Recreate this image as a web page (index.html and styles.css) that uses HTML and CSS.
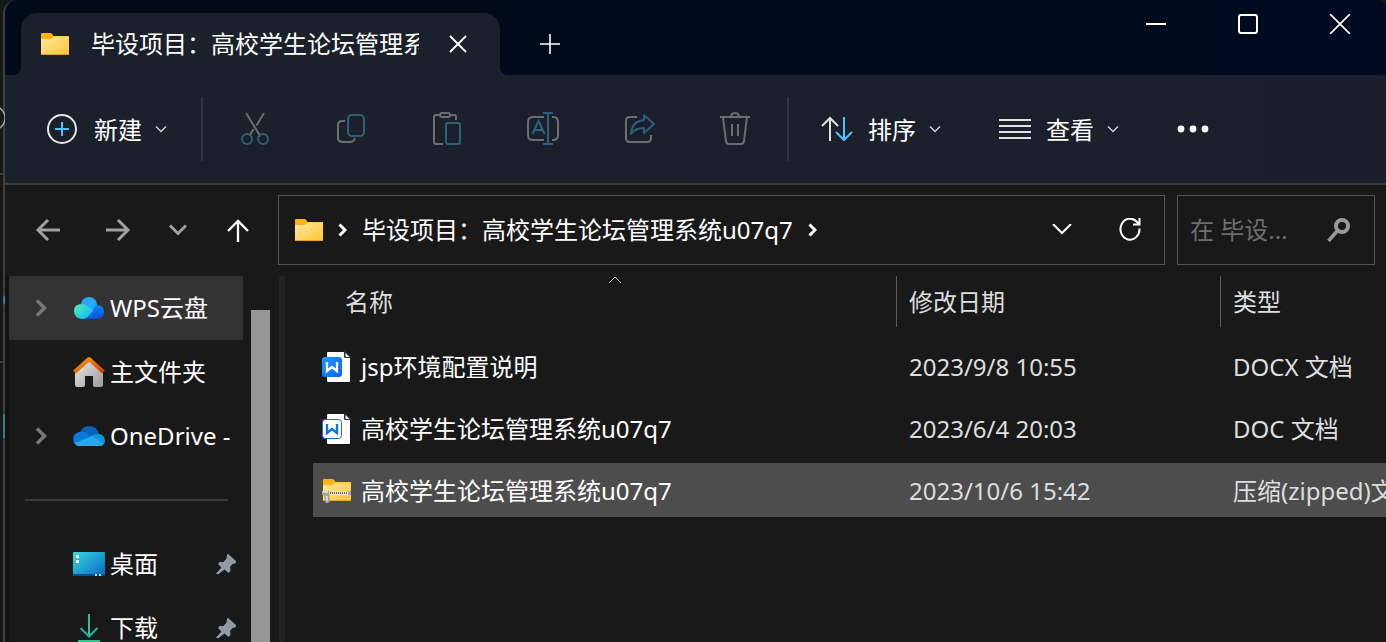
FILE: index.html
```html
<!DOCTYPE html>
<html lang="zh-CN">
<head>
  <meta charset="UTF-8">
  <meta name="viewport" content="width=device-width, initial-scale=1.0">
  <title>毕设项目：高校学生论坛管理系统u07q7</title>
  <link rel="stylesheet" href="styles.css">
</head>
<body>
  <!-- shared shapes -->
  <svg class="defs" width="0" height="0" aria-hidden="true">
    <defs>
      <linearGradient id="folderFront" x1="0" y1="0" x2="1" y2="1">
        <stop offset="0" stop-color="#ffe9a6"/><stop offset="1" stop-color="#ffc52e"/>
      </linearGradient>
      <linearGradient id="wpsBlue" x1="0" y1="0" x2="1" y2="1">
        <stop offset="0" stop-color="#229bff"/><stop offset="1" stop-color="#0a62f5"/>
      </linearGradient>
      <symbol id="folder" viewBox="0 0 28 22">
        <path d="M0 1q0-1 1-1h8.500q1 0 1.700 1l1.300 2H28v6H0z" fill="#fdb40f"/>
        <path d="M0 6h10l2.500-2.500H27q1 0 1 1V21q0 1-1 1H1q-1 0-1-1z" fill="url(#folderFront)"/>
        <path d="M0 21.500h28" stroke="#e9a21b"/>
      </symbol>
      <symbol id="down" viewBox="0 0 12 8">
        <path d="M1 1.500l5 5 5-5" fill="none" stroke="#d0d0d0" stroke-width="1.500"/>
      </symbol>
      <symbol id="expand" viewBox="0 0 12 18">
        <path d="M2 1.500l7.500 7.500L2 16.500" fill="none" stroke="#777" stroke-width="3.500"/>
      </symbol>
      <symbol id="crumb" viewBox="0 0 9 14">
        <path d="M1.500 1.500L7 7l-5.500 5.500" fill="none" stroke="#fff" stroke-width="3"/>
      </symbol>
      <symbol id="pin" viewBox="0 0 22 22">
        <path d="M13 1l8 7-.5 2.500-3 .5-2.500 3 .5 4-2 2-4-3.500-6.500 5-2-1 5.500-6L3 11l1.500-2h4l3-3.500.5-4z" fill="#919ba3"/>
      </symbol>
    </defs>
  </svg>

  <svg class="behind" viewBox="0 0 5 642" width="5" height="642" aria-hidden="true">
    <circle cx="-7" cy="118" r="12" fill="#1a1a1a" stroke="#a5a5a5" stroke-width="1.500"/>
    <path d="M0 174h4M0 362h4" stroke="#3a3a3a" stroke-width="2"/>
    <path d="M5 295q-2 1-2 5t2 5z" fill="#2f7fc4"/>
    <path d="M3 414h2v24H3z" fill="#347d83"/>
  </svg>

  <div class="window">
    <header class="titlebar">
      <div class="tab">
        <svg class="tab-icon" width="28" height="22"><use href="#folder"/></svg>
        <span class="tab-title">毕设项目：高校学生论坛管理系统u07q7</span>
        <button class="tab-close" aria-label="关闭标签页">
          <svg width="18" height="18" viewBox="0 0 18 18"><path d="M1 1l16 16M17 1L1 17" stroke="#fff" stroke-width="1.800"/></svg>
        </button>
      </div>
      <button class="tab-add" aria-label="新建标签页">
        <svg width="20" height="20" viewBox="0 0 20 20"><path d="M10 0v20M0 10h20" stroke="#fff" stroke-width="1.600"/></svg>
      </button>
      <div class="window-controls">
        <button aria-label="最小化"><svg width="20" height="20" viewBox="0 0 20 20"><path d="M0 10h20" stroke="#fff" stroke-width="2"/></svg></button>
        <button aria-label="最大化"><svg width="20" height="20" viewBox="0 0 20 20"><rect x="1" y="1" width="18" height="18" rx="2" fill="none" stroke="#fff" stroke-width="2"/></svg></button>
        <button aria-label="关闭"><svg width="20" height="20" viewBox="0 0 20 20"><path d="M0 0l20 20M20 0L0 20" stroke="#fff" stroke-width="1.700"/></svg></button>
      </div>
    </header>

    <div class="toolbar">
      <button class="menu-button new-button">
        <svg width="30" height="30" viewBox="0 0 30 30"><circle cx="15" cy="15" r="14" fill="none" stroke="#e6e6e6" stroke-width="2"/><path d="M15 8v14M8 15h14" stroke="#4cc2ff" stroke-width="2"/></svg>
        <span>新建</span>
        <svg class="caret" width="12" height="8"><use href="#down"/></svg>
      </button>
      <div class="divider"></div>
      <div class="tools">
        <button aria-label="剪切" disabled>
          <svg width="32" height="34" viewBox="0 0 32 34" fill="none" stroke-width="2"><path d="M7 1l14.500 23.500M25 1l-7.500 12.500M14.500 17L10.500 24" stroke="#6b6d72"/><g stroke="#2c607f"><circle cx="8" cy="27" r="5"/><circle cx="24" cy="27" r="5"/></g></svg>
        </button>
        <button aria-label="复制" disabled>
          <svg width="32" height="32" viewBox="0 0 32 32" fill="none" stroke-width="2"><path d="M10 8H7q-4 0-4 4v13q0 4 5 4h7q4 0 5-4" stroke="#6b6d72"/><rect x="13" y="2" width="16" height="21" rx="4" stroke="#2c607f"/></svg>
        </button>
        <button aria-label="粘贴" disabled>
          <svg width="32" height="34" viewBox="0 0 32 34" fill="none" stroke-width="2"><path d="M12 32H5q-2 0-2-2V5q0-2 2-2h4M19 3h4q2 0 2 2v3" stroke="#6b6d72"/><rect x="9" y="1" width="10" height="4" rx="2" stroke="#6b6d72"/><rect x="15" y="11" width="14" height="21" rx="2" stroke="#2c607f"/></svg>
        </button>
        <button aria-label="重命名" disabled>
          <svg width="34" height="34" viewBox="0 0 34 34" fill="none" stroke-width="2"><path d="M18 5H7q-5 0-5 5v13q0 5 5 5h11M26 5h1q5 0 5 5v13q0 5-5 5h-1" stroke="#6b6d72"/><path d="M6.500 22L12.500 9l6 13M8.500 18h8M22 1v31M17 1h10M17 32h10" stroke="#2c607f"/></svg>
        </button>
        <button aria-label="共享" disabled>
          <svg width="32" height="32" viewBox="0 0 32 32" fill="none" stroke-width="2" stroke-linejoin="round"><path d="M14 4H7q-4 0-4 4v17q0 4 4 4h17q4 0 4-4v-3" stroke="#6b6d72"/><path d="M21 2l10 9-10 9v-5q-9 0-13 6 1-13 13-14z" stroke="#2c607f"/></svg>
        </button>
        <button aria-label="删除" disabled>
          <svg width="32" height="34" viewBox="0 0 32 34" fill="none" stroke="#6b6d72" stroke-width="2"><path d="M1 5h30M4 5l3 24q.500 3 3 3h12q2.500 0 3-3l3-24M12 5q0-4 4-4t4 4M13 12v12M19 12v12"/></svg>
        </button>
      </div>
      <div class="divider"></div>
      <button class="menu-button">
        <svg width="32" height="26" viewBox="0 0 32 26" fill="none" stroke-width="2"><path d="M9 25V2M1 10l8-8 8 8" stroke="#e0e0e0"/><path d="M23 1v23M15 16l8 8 8-8" stroke="#4cc2ff"/></svg>
        <span>排序</span>
        <svg class="caret" width="12" height="8"><use href="#down"/></svg>
      </button>
      <button class="menu-button">
        <svg width="32" height="20" viewBox="0 0 32 20"><path d="M0 1h32M0 7h32M0 13h32M0 19h32" stroke="#e0e0e0" stroke-width="2"/></svg>
        <span>查看</span>
        <svg class="caret" width="12" height="8"><use href="#down"/></svg>
      </button>
      <button class="menu-button" aria-label="查看更多">
        <svg width="32" height="8" viewBox="0 0 32 8" fill="#fff"><circle cx="4" cy="4" r="3.400"/><circle cx="16" cy="4" r="3.400"/><circle cx="28" cy="4" r="3.400"/></svg>
      </button>
    </div>

    <div class="location">
      <div class="history">
        <button aria-label="后退"><svg width="26" height="24" viewBox="0 0 26 24" fill="none" stroke="#a0a0a0" stroke-width="3"><path d="M25 12H3M13 2L3 12l10 10"/></svg></button>
        <button aria-label="前进"><svg width="26" height="24" viewBox="0 0 26 24" fill="none" stroke="#a0a0a0" stroke-width="3"><path d="M1 12h22M13 2l10 10-10 10"/></svg></button>
        <button class="recent" aria-label="最近浏览的位置"><svg width="18" height="12" viewBox="0 0 18 12" fill="none" stroke="#a0a0a0" stroke-width="3"><path d="M1 1.500l8 8 8-8"/></svg></button>
        <button aria-label="向上"><svg width="24" height="24" viewBox="0 0 24 24" fill="none" stroke="#fff" stroke-width="2.300"><path d="M12 24V3M2 13L12 3l10 10"/></svg></button>
      </div>
      <div class="address">
        <svg class="address-icon" width="28" height="22"><use href="#folder"/></svg>
        <svg width="9" height="14"><use href="#crumb"/></svg>
        <a href="#folder-root">毕设项目：高校学生论坛管理系统u07q7</a>
        <svg width="9" height="14"><use href="#crumb"/></svg>
        <button class="address-drop" aria-label="上一个位置"><svg width="20" height="12" viewBox="0 0 20 12" fill="none" stroke="#fff" stroke-width="2"><path d="M1 0l9 9 9-9"/></svg></button>
        <button class="address-refresh" aria-label="刷新"><svg width="24" height="24" viewBox="0 0 24 24" fill="none" stroke="#fff" stroke-width="2"><path d="M21.500 10.500a9.500 10.500 0 1 1-3-7l3 2.500M21.500 0v6.500H15"/></svg></button>
      </div>
      <form class="search">
        <input type="text" aria-label="搜索" placeholder="在 毕设...">
        <button aria-label="搜索"><svg width="24" height="24" viewBox="0 0 24 24" fill="none" stroke="#999"><circle cx="15" cy="8" r="6" stroke-width="4"/><path d="M11 12L1.500 23" stroke-width="3.500"/></svg></button>
      </form>
    </div>

    <div class="content">
      <aside class="sidebar">
        <nav>
          <a class="place active" href="#wps">
            <svg class="arrow" width="12" height="18"><use href="#expand"/></svg>
            <svg width="32" height="24" viewBox="0 0 32 24">
              <defs>
                <linearGradient id="cloudGreen" x1="0" y1="0" x2="1" y2="1"><stop offset="0" stop-color="#52eeb0"/><stop offset="1" stop-color="#08b7ff"/></linearGradient>
                <linearGradient id="cloudBlue" x1="0" y1="0" x2="0" y2="1"><stop offset="0" stop-color="#0a86f8"/><stop offset="1" stop-color="#0450d8"/></linearGradient>
              </defs>
              <circle cx="16" cy="9" r="8" fill="#28a8ff"/>
              <path d="M14 23l9-14q8 0 8 7 0 7-8 7z" fill="url(#cloudBlue)"/>
              <path d="M9 23q-8-1-8-8t8-7q4 0 11 7l-6 7q-2 1-5 1z" fill="url(#cloudGreen)"/>
            </svg>
            <span>WPS云盘</span>
          </a>
          <a class="place" href="#home">
            <i class="arrow"></i>
            <svg width="32" height="32" viewBox="0 0 32 32">
              <defs>
                <linearGradient id="wall" x1="0" y1="0" x2="1" y2="1"><stop offset="0" stop-color="#eee"/><stop offset="1" stop-color="#999"/></linearGradient>
                <linearGradient id="roof" x1="0" y1="0" x2="1" y2="1"><stop offset="0" stop-color="#ff9d0a"/><stop offset="1" stop-color="#cf3c03"/></linearGradient>
              </defs>
              <path d="M2 14L16 2l14 12v15q0 2-2 2h-6q-2 0-2-2v-9h-8v9q0 2-2 2H4q-2 0-2-2z" fill="url(#wall)"/>
              <path d="M1.500 16L16 3l14.500 13" fill="none" stroke="url(#roof)" stroke-width="4" stroke-linejoin="round"/>
            </svg>
            <span>主文件夹</span>
          </a>
          <a class="place" href="#onedrive">
            <svg class="arrow" width="12" height="18"><use href="#expand"/></svg>
            <svg width="32" height="22" viewBox="0 0 32 22">
              <path d="M7 7q3-6 9-6 8 0 10 8l-9 4z" fill="#0763b8"/>
              <path d="M1 18q-3-9 5-11 5-1 8 2l7 4L5 21q-3-1-4-3z" fill="#0b7ad8"/>
              <path d="M18 11q4-3 8-2 6 1 6 7-1 5-6 5z" fill="#1490df"/>
              <path d="M2 18l17-7 12 8q-2 2-4 2H6q-3 0-4-3z" fill="#28a8ea"/>
            </svg>
            <span>OneDrive -</span>
          </a>
          <hr>
          <a class="place" href="#desktop">
            <i class="arrow"></i>
            <svg width="32" height="24" viewBox="0 0 32 24">
              <defs><linearGradient id="desk" x1="0" y1="0" x2="1" y2="1"><stop offset="0" stop-color="#35d9e3"/><stop offset="1" stop-color="#0a68c4"/></linearGradient></defs>
              <rect width="32" height="24" rx="1" fill="url(#desk)"/>
              <path d="M0 22h32v1q0 1-1 1H1q-1 0-1-1z" fill="#0b4f86"/>
              <path d="M3 3h3v3H3zM3 8h3v3H3z" fill="#fff"/><path d="M22 22h2v2h-2zM26 22h2v2h-2z" fill="#b9dcf0"/>
            </svg>
            <span>桌面</span>
            <svg width="22" height="22"><use href="#pin"/></svg>
          </a>
          <a class="place" href="#downloads">
            <i class="arrow"></i>
            <svg width="32" height="30" viewBox="0 0 32 30" fill="none" stroke-width="2">
              <path d="M16 1v22" stroke="#2fc48d"/><path d="M7.500 15l8.500 8.500 8.500-8.500" stroke="#1fb39a"/><path d="M5 28h22" stroke="#2fc48d"/>
            </svg>
            <span>下载</span>
            <svg width="22" height="22"><use href="#pin"/></svg>
          </a>
        </nav>
        <div class="scrollbar"></div>
      </aside>

      <main class="files">
        <table>
          <thead>
            <tr>
              <th class="col-name"><div>名称<svg class="sort-mark" width="14" height="8" viewBox="0 0 14 8"><path d="M1 7l6-6 6 6" fill="none" stroke="#bbb"/></svg></div></th>
              <th class="col-date"><div>修改日期</div></th>
              <th class="col-type"><div>类型</div></th>
            </tr>
          </thead>
          <tbody>
            <tr>
              <td><div class="file">
                <svg width="30" height="32" viewBox="0 0 30 32"><path d="M6 1h16l6 6v23q0 1-1 1H6q-1 0-1-1V2q0-1 1-1z" fill="#fff"/><path d="M22 0h1l6 6v1h-5.500Q22 7 22 5.500z" fill="#2a303a"/><path d="M23.500 2l4 4h-3q-1 0-1-1z" fill="#fff"/><rect y="6" width="20" height="20" rx="3" fill="url(#wpsBlue)"/><path d="M5 11v9l5-4 5 4v-9" fill="none" stroke="#fff" stroke-width="2.300"/></svg>
                <span>jsp环境配置说明</span>
              </div></td>
              <td>2023/9/8 10:55</td>
              <td>DOCX 文档</td>
            </tr>
            <tr>
              <td><div class="file">
                <svg width="30" height="32" viewBox="0 0 30 32"><path d="M6 1h16l6 6v23q0 1-1 1H6q-1 0-1-1V2q0-1 1-1z" fill="#fff"/><path d="M22 0h1l6 6v1h-5.500Q22 7 22 5.500z" fill="#2a303a"/><path d="M23.500 2l4 4h-3q-1 0-1-1z" fill="#fff"/><rect x=".5" y="6.500" width="19" height="19" rx="3" fill="#fff" stroke="#0d6efd"/><path d="M5 11v9l5-4 5 4v-9" fill="none" stroke="#0d6efd" stroke-width="2.300"/></svg>
                <span>高校学生论坛管理系统u07q7</span>
              </div></td>
              <td>2023/6/4 20:03</td>
              <td>DOC 文档</td>
            </tr>
            <tr class="selected">
              <td><div class="file">
                <svg width="30" height="24" viewBox="0 0 30 24"><svg x="1" width="28" height="22"><use href="#folder"/></svg><path d="M7 14h22" stroke="#f3e4b5" stroke-width="4"/><path d="M8 14h20" stroke="#6c6552" stroke-width="2" stroke-dasharray="1 1"/><path d="M26 12h3v4h-3z" fill="#a9a9a9"/><path d="M0 12h7l1 10-2 2H4l-1-2-1-6H0z" fill="#aaa59c"/><path d="M1 13h5M5 17v5" stroke="#e9e9e9" stroke-width="1.500"/></svg>
                <span>高校学生论坛管理系统u07q7</span>
              </div></td>
              <td>2023/10/6 15:42</td>
              <td>压缩(zipped)文件夹</td>
            </tr>
          </tbody>
        </table>
      </main>
    </div>
  </div>
</body>
</html>
```
FILE: styles.css
```css
* {
  box-sizing: border-box;
}
body {
  margin: 0;
  height: 100vh;
  overflow: hidden;
  background: #171717;
  color: #fff;
  font-family: "Noto Sans", "Noto Sans CJK SC", sans-serif;
  font-size: 24px;
  line-height: 32px;
}
svg {
  display: block;
  flex: none;
}
button, input {
  font: inherit;
  color: inherit;
  background: none;
  border: none;
  padding: 0;
}
button {
  display: flex;
  align-items: center;
  justify-content: center;
}
a {
  color: inherit;
  text-decoration: none;
}
.defs, .behind {
  position: absolute;
  top: 0;
  left: 0;
}
.behind {
  z-index: 2;
}

.window {
  display: flex;
  flex-direction: column;
  height: 100%;
  margin-left: 3px;
  border-left: 2px solid #3f3f40;
  border-radius: 14px 8px 0 0;
  background: #191919;
  overflow: hidden;
}

/* title bar */
.titlebar {
  display: flex;
  height: 75px;
  padding: 13px 0 0 16px;
  background: linear-gradient(to right, #000a19, #000a20);
}
.tab {
  position: relative;
  display: flex;
  align-items: center;
  width: 479px;
  padding: 0 33px 0 20px;
  background: #1b212a;
  border-radius: 16px 16px 0 0;
}
.tab::before, .tab::after {
  content: "";
  position: absolute;
  bottom: 0;
  width: 8px;
  height: 8px;
}
.tab::before {
  right: 100%;
  background: radial-gradient(circle at 0 0, transparent 8px, #1b212a 8px);
}
.tab::after {
  left: 100%;
  background: radial-gradient(circle at 100% 0, transparent 8px, #1b212a 8px);
}
.tab-icon {
  margin-right: 22px;
}
.tab-title {
  flex: 1;
  overflow: hidden;
  white-space: nowrap;
}
.tab-close {
  margin-left: 30px;
}
.tab-add {
  width: 100px;
}
.window-controls {
  display: flex;
  margin: -13px 0 0 auto;
  height: 48px;
}
.window-controls button {
  width: 92px;
}

/* command bar */
.toolbar {
  display: flex;
  align-items: center;
  height: 110px;
  padding-left: 10px;
  background: linear-gradient(to right, #1b212a, #1a1f2c);
  border-bottom: 2px solid #3c3c3c;
}
.menu-button {
  height: 64px;
  padding: 0 26px 0 32px;
}
.new-button {
  padding-right: 34px;
}
.menu-button span {
  margin: 0 13px 0 15px;
  padding-top: 2px;
}
.new-button span {
  margin-left: 17px;
}
.divider {
  width: 2px;
  height: 64px;
  background: #30353f;
}
.tools {
  display: flex;
  padding: 0 4px;
}
.tools button {
  width: 96px;
  height: 64px;
}

/* address bar */
.location {
  display: flex;
  height: 91px;
  padding: 10px 11px 11px 8px;
}
.history {
  display: flex;
  margin-right: 5px;
}
.history button {
  width: 70px;
}
.history .recent {
  width: 50px;
}
.address {
  flex: 1;
  display: flex;
  align-items: center;
  padding: 0 22px 0 16px;
  border: 1px solid #535353;
}
.address-icon {
  margin-right: 15px;
}
.address a {
  margin: 0 15px;
}
.address-drop {
  margin-left: auto;
}
.address-refresh {
  margin-left: 46px;
}
.search {
  display: flex;
  align-items: center;
  width: 198px;
  margin-left: 12px;
  padding: 0 23px 0 12px;
  border: 1px solid #535353;
}
.search input {
  flex: 1;
  min-width: 0;
  outline: none;
}
.search input::placeholder {
  color: #6e6e6e;
  opacity: 1;
}

/* sidebar and file list */
.content {
  flex: 1;
  display: flex;
  min-height: 0;
}
.sidebar {
  display: flex;
  flex: none;
  width: 280px;
  border-left: 4px solid #131313;
  border-right: 6px solid #222;
  overflow: hidden;
}
.sidebar nav {
  width: 234px;
}
.place {
  display: flex;
  align-items: center;
  height: 64px;
  padding: 0 6px 0 26px;
  border-radius: 2px;
}
.place.active {
  background: #333;
}
.place .arrow {
  width: 12px;
  margin-right: 26px;
}
.place span {
  flex: 1;
  margin-left: 5px;
  white-space: nowrap;
}
.sidebar hr {
  height: 2px;
  margin: 31px 15px 31px 16px;
  border: none;
  background: #3b3b3b;
}
.scrollbar {
  width: 19px;
  margin: 34px 0 0 8px;
  background: #969696;
}

.files {
  flex: 1;
  min-width: 0;
  padding-left: 28px;
  overflow: hidden;
}
table {
  width: 100%;
  table-layout: fixed;
  border-spacing: 0;
}
th {
  height: 59px;
  padding: 0;
  text-align: left;
  vertical-align: top;
  font-weight: normal;
  color: #dedede;
}
th div {
  position: relative;
  height: 51px;
  padding: 10px 12px;
  border-left: 1px solid #5c5c5c;
}
.col-name div {
  margin-left: 19px;
  border-color: transparent;
}
.col-date {
  width: 324px;
}
.col-type {
  width: 166px;
}
.sort-mark {
  position: absolute;
  top: 0;
  left: 50%;
  margin-left: -7px;
}
td {
  height: 62px;
  padding: 2px 0 0 13px;
  border: solid transparent;
  border-width: 4px 0;
  background-clip: padding-box;
  white-space: nowrap;
  overflow: hidden;
  color: #dedede;
}
td:first-child {
  padding-left: 9px;
  color: #fff;
  border-radius: 2px 0 0 2px;
}
.file {
  display: flex;
  align-items: center;
  gap: 9px;
}
.selected td {
  background-color: #4d4d4d;
}
```
